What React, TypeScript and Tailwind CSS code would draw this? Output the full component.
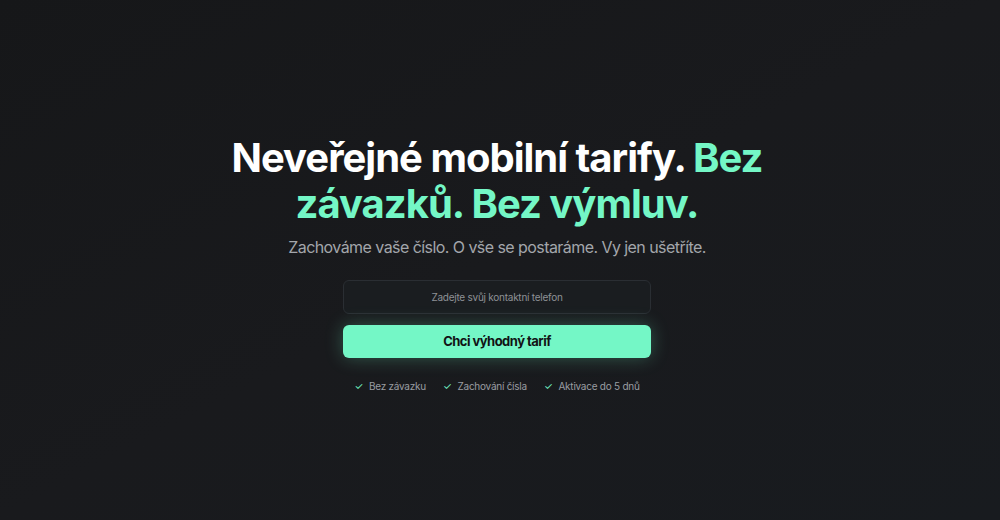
import React from 'react'

const perks = ['Bez závazku', 'Zachování čísla', 'Aktivace do 5 dnů']

export default function App() {
  return (
    <div className="min-h-screen w-full bg-gradient-to-br from-[#161719] via-[#191a1d] to-[#181b1f] flex items-center justify-center font-['Inter',sans-serif]">
      <div className="flex flex-col items-center text-center pr-[6px] pt-[9px]">
        <h1 className="max-w-[600px] text-[40px] leading-[46px] font-bold tracking-tight text-white">
          Neveřejné mobilní tarify. <span className="text-[#74f7c6]">Bez závazků. Bez výmluv.</span>
        </h1>
        <p className="mt-[8px] text-[16px] tracking-[-0.035em] text-[#a3a6ab]">
          Zachováme vaše číslo. O vše se postaráme. Vy jen ušetříte.
        </p>

        <input
          type="tel"
          placeholder="Zadejte svůj kontaktní telefon"
          className="mt-[21px] w-[308px] h-[34px] rounded-md border border-[#2a2e33] bg-[#1a1d20] text-center text-[10px] tracking-tight text-white placeholder:text-[#8e9196] outline-none"
        />
        <button className="mt-[11px] w-[308px] h-[33px] rounded-md bg-[#74f7c6] text-[13px] tracking-[-0.04em] font-bold text-[#111315] shadow-[0_0_18px_rgba(116,247,198,0.28)]">
          Chci výhodný tarif
        </button>

        <div className="mt-[21px] flex items-center gap-[17px] text-[10px] tracking-tight text-[#9a9da2]">
          {perks.map(p => (
            <span key={p} className="flex items-center gap-[6px]">
              <span className="text-[#74f7c6] text-[10px]">✓</span>
              {p}
            </span>
          ))}
        </div>
      </div>
    </div>
  )
}
